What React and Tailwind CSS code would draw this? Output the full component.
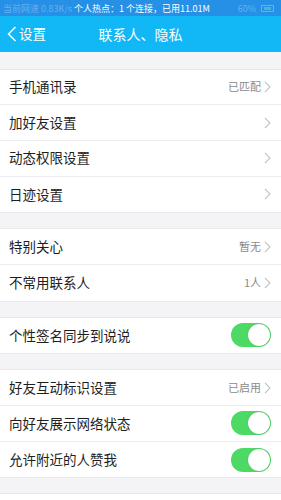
import React from "react";

const font = { fontFamily: '"Noto Sans CJK SC", "Noto Sans", sans-serif' };

function Chevron() {
  return (
    <svg width="7" height="12" viewBox="0 0 7 12" className="ml-[3px]">
      <path d="M1 1 L6 6 L1 11" fill="none" stroke="#c4c4c6" strokeWidth="1.1" />
    </svg>
  );
}

function Toggle() {
  return (
    <div className="w-[40px] h-[24px] rounded-full bg-[#4cd964] flex items-center justify-end pr-[1px]">
      <div className="w-[22px] h-[22px] rounded-full bg-white shadow-[0_0_1px_rgba(0,0,0,0.3)]" />
    </div>
  );
}

function Row({ label, value, chevron, toggle, last }) {
  return (
    <div
      className={`h-[35.7px] flex items-center pl-[9px] pr-[10px] bg-white ${
        last ? "" : "border-b border-[#ececee]"
      }`}
    >
      <span className="text-[13.5px] text-[#1e1e1e] flex-1 leading-none">{label}</span>
      {value && <span className="text-[11px] text-[#8a8a8a] leading-none">{value}</span>}
      {chevron && <Chevron />}
      {toggle && <Toggle />}
    </div>
  );
}

function Group({ children }) {
  return <div className="bg-white border-y border-[#e9e9eb]">{children}</div>;
}

export default function App() {
  return (
    <div className="w-[281px] h-[500px] overflow-hidden bg-[#f4f4f6]" style={font}>
      <div className="h-[16px] bg-[#2590e6] flex items-center px-[3px] text-[9px] leading-none">
        <span className="text-white/30">当前网速 0.83K/s</span>
        <span className="text-white ml-[2px]">个人热点：1 个连接，已用11.01M</span>
        <span className="text-white/30 ml-auto">60%</span>
        <div className="ml-[5px] w-[13px] h-[7px] border border-white/30 rounded-[1px] flex items-center justify-center mr-[4px]">
          <div className="w-[7px] h-[3px] bg-[#7ed8a0]/50" />
        </div>
      </div>
      <div className="h-[36px] bg-[#12b7f5] relative flex items-center">
        <div className="flex items-center pl-[7px] text-white">
          <svg width="10" height="16" viewBox="0 0 10 16">
            <path d="M8.5 1 L1.5 8 L8.5 15" fill="none" stroke="white" strokeWidth="1.5" />
          </svg>
          <span className="text-[13.5px] ml-[2px] leading-none">设置</span>
        </div>
        <span className="absolute left-0 right-0 text-center text-[14px] text-white leading-none pointer-events-none">
          联系人、隐私
        </span>
      </div>
      <div className="h-[16.5px]" />
      <Group>
        <Row label="手机通讯录" value="已匹配" chevron />
        <Row label="加好友设置" chevron />
        <Row label="动态权限设置" chevron />
        <Row label="日迹设置" chevron last />
      </Group>
      <div className="h-[15px]" />
      <Group>
        <Row label="特别关心" value="暂无" chevron />
        <Row label="不常用联系人" value="1人" chevron last />
      </Group>
      <div className="h-[15px]" />
      <Group>
        <Row label="个性签名同步到说说" toggle last />
      </Group>
      <div className="h-[15px]" />
      <Group>
        <Row label="好友互动标识设置" value="已启用" chevron />
        <Row label="向好友展示网络状态" toggle />
        <Row label="允许附近的人赞我" toggle last />
      </Group>
      <div className="h-[15px]" />
      <Group>
        <Row label="" toggle last />
      </Group>
    </div>
  );
}
